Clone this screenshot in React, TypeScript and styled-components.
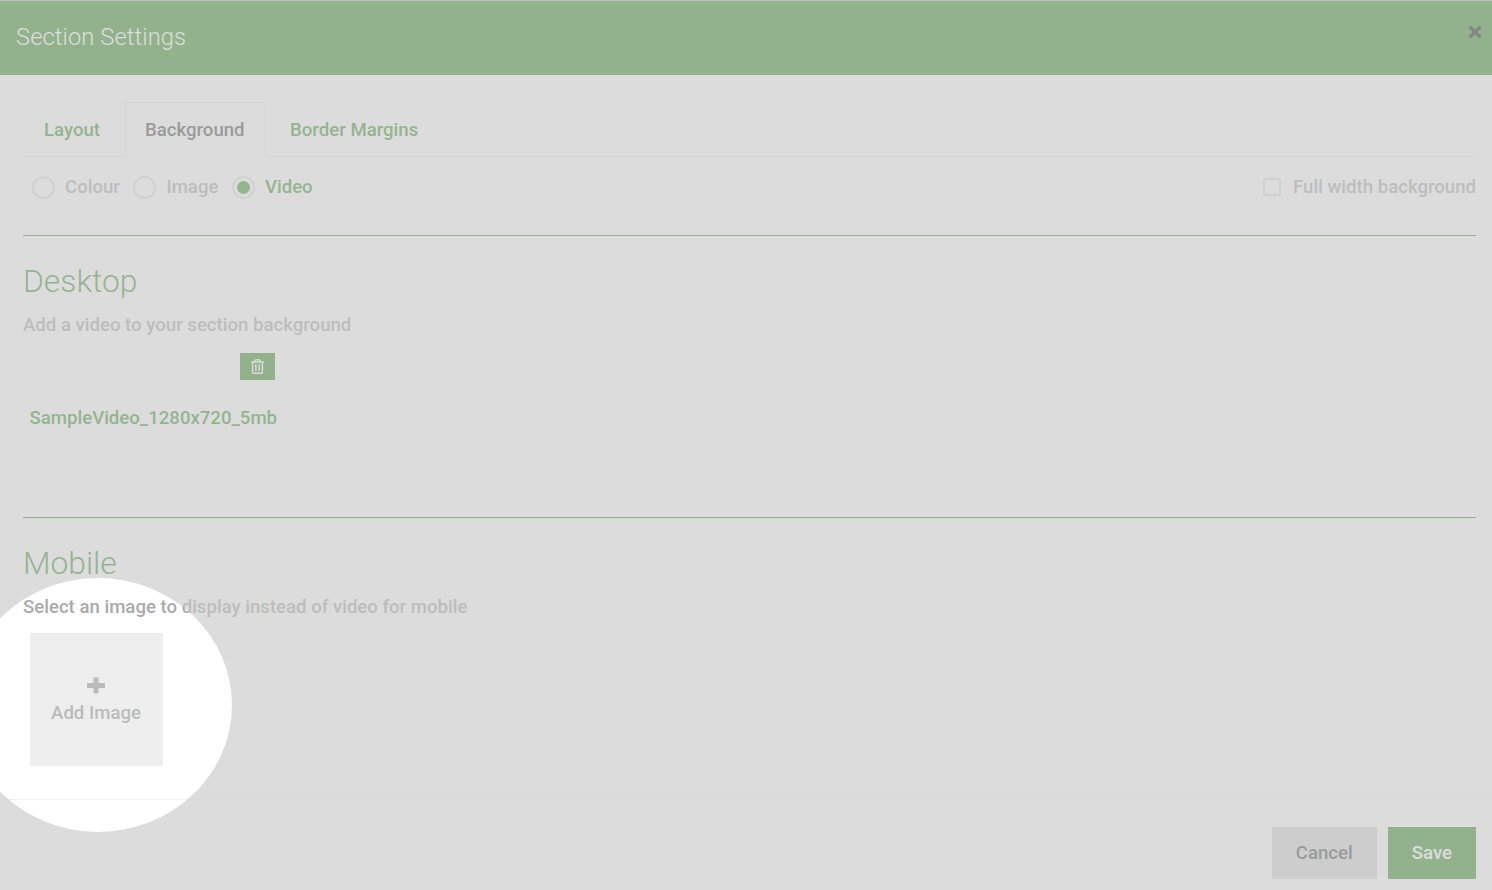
import React from 'react';
import styled, { createGlobalStyle } from 'styled-components';
import { FaRegTrashAlt, FaTimes } from 'react-icons/fa';

const GREEN = '#348c24';
const TEXT_GREEN = '#39932b';
const MUTED = '#aaaaaa';

const GlobalStyle = createGlobalStyle`
  html, body { margin: 0; padding: 0; background: #fff; }
  body { font-family: Roboto, "Liberation Sans", sans-serif; overflow: hidden; }
  * { box-sizing: border-box; }
`;

const Page = styled.div`
  position: relative;
  width: 1492px;
  height: 890px;
  overflow: hidden;
  display: flex;
  flex-direction: column;
  background: #fff;
`;

const Spotlight = styled.div`
  position: absolute;
  left: -36px;
  top: 578px;
  width: 268px;
  height: 254px;
  border-radius: 50%;
  box-shadow: 0 0 0 2400px rgba(200, 200, 200, 0.635);
  pointer-events: none;
`;

const Header = styled.header`
  flex: none;
  height: 75px;
  border-top: 1px solid #aaa;
  padding: 0 16px;
  display: flex;
  align-items: center;
  justify-content: space-between;
  background: ${GREEN};
  color: #fff;
`;

const Title = styled.h1`
  margin: 0 0 2px;
  font-size: 23.7px;
  font-weight: 300;
  letter-spacing: 0.1px;
`;

const CloseButton = styled.span`
  display: flex;
  margin: -13px -7.5px 0 0;
  font-size: 18px;
  color: #111;
`;

const Body = styled.main`
  flex: none;
  padding: 27px 16px 0 23px;
`;

const Tabs = styled.nav`
  height: 55px;
  display: flex;
  border-bottom: 1px solid #e9e9e9;
`;

const Tab = styled.div<{ $active?: boolean }>`
  height: 55px;
  padding: 0 20px 0 19px;
  display: flex;
  align-items: center;
  font-size: 18.6px;
  font-weight: 500;
  color: ${p => (p.$active ? '#4a4a4a' : TEXT_GREEN)};
  background: ${p => (p.$active ? '#fff' : 'transparent')};
  border: 1px solid ${p => (p.$active ? '#e9e9e9' : 'transparent')};
  border-bottom-color: ${p => (p.$active ? '#fff' : 'transparent')};
  &:first-child { padding: 0 24px 0 20px; }
  &:nth-child(2) { margin-right: 4.5px; }
`;

const OptionRow = styled.div`
  height: 79px;
  padding: 18px 0 0 9px;
  display: flex;
  justify-content: space-between;
  align-items: flex-start;
  border-bottom: 1px solid ${TEXT_GREEN};
`;

const Radios = styled.div`
  display: flex;
  gap: 13.5px;
`;

const Option = styled.label<{ $on?: boolean }>`
  display: flex;
  align-items: center;
  gap: 10px;
  height: 24px;
  font-size: 18.6px;
  font-weight: 500;
  color: ${p => (p.$on ? TEXT_GREEN : MUTED)};
`;

const Radio = styled.span<{ $on?: boolean }>`
  width: 23px;
  height: 23px;
  border-radius: 50%;
  border: 2px solid #e2e2e2;
  display: flex;
  align-items: center;
  justify-content: center;
  &::after {
    content: '';
    width: 13px;
    height: 13px;
    border-radius: 50%;
    background: ${p => (p.$on ? TEXT_GREEN : 'transparent')};
  }
`;

const FullWidth = styled(Option)`
  gap: 12px;
`;

const Checkbox = styled.span`
  width: 18px;
  height: 18px;
  border: 2px solid #e2e2e2;
  border-radius: 2px;
`;

const Section = styled.section<{ $height: number }>`
  height: ${p => p.$height}px;
  padding-top: 27px;
`;

const SectionRule = styled(Section)`
  border-bottom: 1px solid ${TEXT_GREEN};
`;

const Heading = styled.h2`
  margin: 0;
  font-size: 31.8px;
  line-height: 36px;
  font-weight: 300;
  color: ${TEXT_GREEN};
`;

const Hint = styled.p`
  margin: 15px 0 0;
  height: 22px;
  font-size: 18.6px;
  line-height: 22px;
  font-weight: 500;
  color: ${MUTED};
`;

const TrashButton = styled.span`
  display: flex;
  align-items: center;
  justify-content: center;
  width: 35px;
  height: 27px;
  margin: 17px 0 0 217px;
  padding-right: 1px;
  font-size: 15px;
  color: #fff;
  background: ${GREEN};
`;

const FileName = styled.div`
  margin: 27px 0 0 6.5px;
  font-size: 18.6px;
  line-height: 22px;
  font-weight: 500;
  color: ${TEXT_GREEN};
`;

const AddImage = styled.div`
  width: 133px;
  height: 133px;
  margin: 15px 0 0 7px;
  display: flex;
  flex-direction: column;
  align-items: center;
  padding: 44px 1px 0 0;
  gap: 8px;
  font-size: 18.6px;
  font-weight: 500;
  color: #bbbbbb;
  background: #eeeeee;
  svg { margin-right: 1px; }
`;

const Footer = styled.footer`
  flex: none;
  height: 91px;
  padding: 27px 16px 0 0;
  display: flex;
  justify-content: flex-end;
  gap: 11px;
  border-top: 1px solid #f3f3f3;
`;

const Button = styled.button<{ $primary?: boolean }>`
  height: 52px;
  padding: 0 24px;
  border: 0;
  font-family: inherit;
  font-size: 18.6px;
  font-weight: 500;
  color: ${p => (p.$primary ? '#fff' : '#4a4a4a')};
  background: ${p => (p.$primary ? GREEN : '#d5d5d5')};
`;

function PlusIcon() {
  return (
    <svg width="18" height="17" viewBox="0 0 18 17" fill="currentColor" aria-hidden="true">
      <path d="M6.5 0.5h5v5.5H18v5h-6.5v5.5h-5V11H0V6h6.5z" />
    </svg>
  );
}

export default function App() {
  return (
    <Page>
      <GlobalStyle />
      <Header>
        <Title>Section Settings</Title>
        <CloseButton><FaTimes /></CloseButton>
      </Header>
      <Body>
        <Tabs>
          <Tab>Layout</Tab>
          <Tab $active>Background</Tab>
          <Tab>Border Margins</Tab>
        </Tabs>
        <OptionRow>
          <Radios>
            <Option><Radio />Colour</Option>
            <Option><Radio />Image</Option>
            <Option $on><Radio $on />Video</Option>
          </Radios>
          <FullWidth><Checkbox />Full width background</FullWidth>
        </OptionRow>
        <SectionRule $height={282}>
          <Heading>Desktop</Heading>
          <Hint>Add a video to your section background</Hint>
          <TrashButton><FaRegTrashAlt /></TrashButton>
          <FileName>SampleVideo_1280x720_5mb</FileName>
        </SectionRule>
        <Section $height={281}>
          <Heading>Mobile</Heading>
          <Hint>Select an image to display instead of video for mobile</Hint>
          <AddImage>
            <PlusIcon />
            Add Image
          </AddImage>
        </Section>
      </Body>
      <Footer>
        <Button>Cancel</Button>
        <Button $primary>Save</Button>
      </Footer>
      <Spotlight />
    </Page>
  );
}
